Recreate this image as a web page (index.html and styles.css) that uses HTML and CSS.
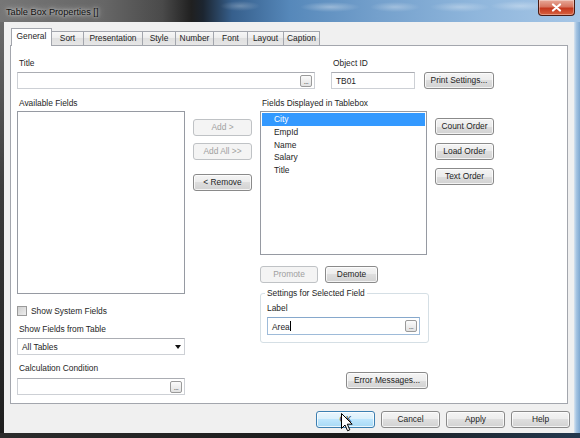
FILE: index.html
```html
<!DOCTYPE html>
<html>
<head>
<meta charset="utf-8">
<title>Table Box Properties</title>
<link rel="stylesheet" href="styles.css">
</head>
<body>
<div class="window">
  <div class="titlebar">
    <span class="title">Table Box Properties []</span>
    <div class="close"><svg width="11" height="9" viewBox="0 0 11 9"><path d="M2 1.5 L9 7.5 M9 1.5 L2 7.5" stroke="#fff" stroke-width="2.2" stroke-linecap="round"/></svg></div>
  </div>
  <div class="mid">
    <div class="frame-l"></div>
    <div class="client">
      <div class="tabs">
        <div class="tab active t-general">General</div>
        <div class="tab t-sort">Sort</div>
        <div class="tab t-pres">Presentation</div>
        <div class="tab t-style">Style</div>
        <div class="tab t-number">Number</div>
        <div class="tab t-font">Font</div>
        <div class="tab t-layout">Layout</div>
        <div class="tab t-caption">Caption</div>
      </div>
      <div class="panel">
        <div class="top-row">
          <div class="field f-title">
            <div class="lbl">Title</div>
            <div class="input"><span class="val"></span><span class="dots">...</span></div>
          </div>
          <div class="field f-id">
            <div class="lbl">Object ID</div>
            <div class="input"><span class="val">TB01</span></div>
          </div>
          <button class="btn b-print">Print Settings...</button>
        </div>
        <div class="main-row">
          <div class="col-left">
            <div class="lbl">Available Fields</div>
            <div class="listbox lb-avail"></div>
            <div class="check-row"><span class="checkbox"></span><span>Show System Fields</span></div>
            <div class="lbl l-table">Show Fields from Table</div>
            <div class="input select"><span class="val">All Tables</span><span class="arrow"></span></div>
            <div class="lbl l-calc">Calculation Condition</div>
            <div class="input calc"><span class="val"></span><span class="dots">...</span></div>
          </div>
          <div class="col-mid">
            <button class="btn disabled">Add &gt;</button>
            <button class="btn disabled b-addall">Add All &gt;&gt;</button>
            <button class="btn b-remove">&lt; Remove</button>
          </div>
          <div class="col-list">
            <div class="lbl">Fields Displayed in Tablebox</div>
            <div class="listbox lb-shown">
              <div class="item selected">City</div>
              <div class="item">EmpId</div>
              <div class="item">Name</div>
              <div class="item">Salary</div>
              <div class="item">Title</div>
            </div>
            <div class="promote-row">
              <button class="btn disabled b-promote">Promote</button>
              <button class="btn b-demote">Demote</button>
            </div>
            <div class="group">
              <div class="legend">Settings for Selected Field</div>
              <div class="lbl g-lbl">Label</div>
              <div class="input focus g-input"><span class="val">Area<span class="caret"></span></span><span class="dots">...</span></div>
            </div>
            <button class="btn b-error">Error Messages...</button>
          </div>
          <div class="col-right">
            <button class="btn">Count Order</button>
            <button class="btn">Load Order</button>
            <button class="btn">Text Order</button>
          </div>
        </div>
      </div>
      <div class="footer">
        <button class="btn default">OK</button>
        <button class="btn">Cancel</button>
        <button class="btn">Apply</button>
        <button class="btn">Help</button>
      </div>
    </div>
    <div class="frame-r"></div>
  </div>
  <div class="frame-b"></div>
  <svg class="cursor" width="13" height="19" viewBox="0 0 13 19"><path d="M0.5 0.5 L0.5 15.5 L4 12 L6.6 17.8 L8.8 16.8 L6.3 11.2 L11.2 11.2 Z" fill="#fff" stroke="#000" stroke-width="1" stroke-linejoin="round"/></svg>
</div>
</body>
</html>
```
FILE: styles.css
```css
* { box-sizing: border-box; }
html, body { margin: 0; padding: 0; }
body {
  width: 580px;
  height: 438px;
  overflow: hidden;
  background: #1a1a1a;
  font-family: "Liberation Sans", Arial, sans-serif;
  font-size: 8.4px;
  color: #1e1e1e;
}
.window {
  position: relative;
  width: 580px;
  height: 438px;
  display: flex;
  flex-direction: column;
}
.titlebar {
  flex: none;
  height: 22px;
  display: flex;
  align-items: flex-start;
  background:
    radial-gradient(ellipse 30px 5px at 330px 7px, rgba(255,255,255,.35), transparent),
    radial-gradient(ellipse 25px 5px at 395px 7px, rgba(255,255,255,.3), transparent),
    radial-gradient(ellipse 30px 5px at 460px 7px, rgba(255,255,255,.3), transparent),
    radial-gradient(ellipse 30px 5px at 520px 6px, rgba(255,255,255,.3), transparent),
    radial-gradient(ellipse 20px 5px at 240px 6px, rgba(255,255,255,.25), transparent),
    linear-gradient(90deg, #767676 0%, #666 18%, #4a4a4a 28%, #202020 33%, #1c2530 35%, #365f8c 40%, #5688ba 50%, #74a0cc 65%, #8fb6dc 82%, #a6c6e6 100%);
}
.title {
  margin: 6px 0 0 6px;
  font-size: 9.2px;
  line-height: 12px;
  color: #111;
  text-shadow: 0 0 6px rgba(255,255,255,.85), 0 0 3px rgba(255,255,255,.6);
}
.close {
  margin-left: auto;
  margin-right: 5px;
  width: 37px;
  height: 16px;
  border: 1px solid #4a1a12;
  border-top: none;
  border-radius: 0 0 4px 4px;
  background: linear-gradient(#e8a999, #d77560 45%, #c4381f 55%, #d8623f);
  box-shadow: inset 0 0 0 1px rgba(255,255,255,.35);
  display: flex;
  align-items: center;
  justify-content: center;
}
.mid {
  flex: 1;
  min-height: 0;
  display: flex;
}
.frame-l {
  width: 4px;
  background: linear-gradient(#6a6a6a, #3c3c3c 40%, #1e1e1e);
}
.frame-r {
  width: 6px;
  background: linear-gradient(90deg, #d7e3ef, #a5c4e2 40%, #7fa8d0);
}
.frame-b {
  flex: none;
  height: 5px;
  background: linear-gradient(90deg, #2c2c2c, #1a1a1a 60%, #23384e);
}
.client {
  width: 570px;
  background: #f0f0f0;
  padding: 6px 6px 5px 6px;
  display: flex;
  flex-direction: column;
}

/* tabs */
.tabs {
  flex: none;
  height: 17px;
  display: flex;
  align-items: flex-end;
  padding-left: 1px;
  position: relative;
  z-index: 1;
}
.tab {
  height: 14px;
  line-height: 13px;
  text-align: center;
  white-space: nowrap;
  border: 1px solid #a3a6ad;
  border-bottom: none;
  margin-right: -1px;
  background: linear-gradient(#f7f7f7, #ececec 50%, #e0e0e0 50%, #e6e6e6);
}
.tab.active {
  height: 18px;
  line-height: 15px;
  margin-bottom: -1px;
  background: #fff;
  position: relative;
  z-index: 2;
}
.t-general { width: 41px; }
.t-sort { width: 33px; }
.t-pres { width: 60px; }
.t-style { width: 34px; }
.t-number { width: 39px; }
.t-font { width: 35px; }
.t-layout { width: 37px; }
.t-caption { width: 37px; }

.panel {
  flex: none;
  height: 359px;
  background: #fff;
  border: 1px solid #a3a6ad;
}

/* generic controls */
.lbl {
  height: 12px;
  line-height: 12px;
  padding-left: 2px;
  white-space: nowrap;
}
.input {
  height: 17px;
  border: 1px solid #cdd0d5;
  border-top-color: #abadb3;
  background: #fff;
  display: flex;
  align-items: center;
  padding: 0 2px 0 4px;
  white-space: nowrap;
}
.input .val { flex: 1; }
.input.focus { border-color: #9ebbd9; border-top-color: #86a8cc; }
.dots {
  width: 12px;
  height: 12px;
  border: 1px solid #9a9a9a;
  border-radius: 2px;
  background: linear-gradient(#fbfbfb, #e2e2e2);
  font-size: 7px;
  line-height: 12px;
  text-align: center;
  color: #333;
  letter-spacing: -0.5px;
}
.caret {
  display: inline-block;
  width: 1px;
  height: 10px;
  background: #000;
  vertical-align: -1px;
}
.btn {
  height: 17px;
  padding: 0;
  margin: 0;
  border: 1px solid #8a8a8a;
  border-radius: 3px;
  font: inherit;
  color: #1e1e1e;
  line-height: 15px;
  white-space: nowrap;
  background: linear-gradient(#f4f4f4, #ececec 50%, #dedede 50%, #d2d2d2);
  box-shadow: inset 0 0 0 1px rgba(255,255,255,.75);
}
.btn.disabled {
  border-color: #bfc2c5;
  background: #f4f4f4;
  color: #a0a0a0;
  box-shadow: none;
}
.btn.default {
  border-color: #3c7fb1;
  background: linear-gradient(#eaf6fd, #d9f0fc 50%, #bee6fd 50%, #a7d9f5);
}
.listbox {
  border: 1px solid #969aa2;
  background: #fff;
}

/* top row */
.top-row {
  display: flex;
  margin-top: 11px;
  padding-left: 6px;
}
.field .input { margin-top: 3px; }
.f-title { width: 298px; }
.f-id { width: 84px; margin-left: 16px; }
.b-print { width: 70px; margin-left: 9px; align-self: flex-end; }

/* main row */
.main-row {
  display: flex;
  align-items: flex-start;
  margin-top: 8px;
  padding-left: 6px;
}
.col-left {
  width: 168px;
  display: flex;
  flex-direction: column;
}
.lb-avail { height: 183px; margin-top: 2px; }
.check-row {
  display: flex;
  align-items: center;
  gap: 4px;
  height: 12px;
  margin-top: 11px;
}
.checkbox {
  width: 10px;
  height: 10px;
  border: 1px solid #9a9a9a;
  background: linear-gradient(135deg, #cfcfcf, #eeeeee);
}
.l-table { margin-top: 6px; }
.select { margin-top: 3px; padding-right: 3px; }
.arrow {
  width: 0;
  height: 0;
  border-left: 3px solid transparent;
  border-right: 3px solid transparent;
  border-top: 4px solid #111;
}
.l-calc { margin-top: 7px; }
.calc { margin-top: 4px; }

.col-mid {
  width: 59px;
  margin-left: 8px;
  padding-top: 22px;
  display: flex;
  flex-direction: column;
}
.b-addall { margin-top: 7px; }
.b-remove { margin-top: 14px; }

.col-list {
  width: 169px;
  margin-left: 8px;
  display: flex;
  flex-direction: column;
}
.lb-shown {
  width: 167px;
  height: 144px;
  margin-top: 2px;
  padding: 1px 0;
}
.item {
  height: 12.75px;
  line-height: 12.75px;
  padding-left: 12px;
  margin: 0 1px;
}
.item.selected { background: #3399ff; color: #fff; }
.promote-row {
  display: flex;
  gap: 7px;
  margin-top: 11px;
}
.b-promote { width: 58px; }
.b-demote { width: 53px; }
.group {
  margin-top: 10px;
  height: 50px;
  border: 1px solid #d5dfe5;
  border-radius: 3px;
  padding-left: 6px;
  display: flex;
  flex-direction: column;
  align-items: flex-start;
}
.legend {
  margin: -7px 0 0 -2px;
  padding: 0 2px;
  line-height: 12px;
  background: #fff;
}
.g-lbl { margin-top: 3px; padding-left: 0; }
.g-input { width: 153px; height: 18px; margin-top: 3px; }
.b-error {
  width: 82px;
  margin-top: 29px;
  margin-right: 1px;
  align-self: flex-end;
}

.col-right {
  width: 59px;
  margin-left: 6px;
  padding-top: 21px;
  display: flex;
  flex-direction: column;
  gap: 8px;
}

/* footer */
.footer {
  flex: none;
  height: 17px;
  margin-top: 7px;
  margin-right: -2px;
  display: flex;
  justify-content: flex-end;
  gap: 6px;
}
.footer .btn { width: 59px; }

.cursor {
  position: absolute;
  left: 341px;
  top: 413px;
}
```
